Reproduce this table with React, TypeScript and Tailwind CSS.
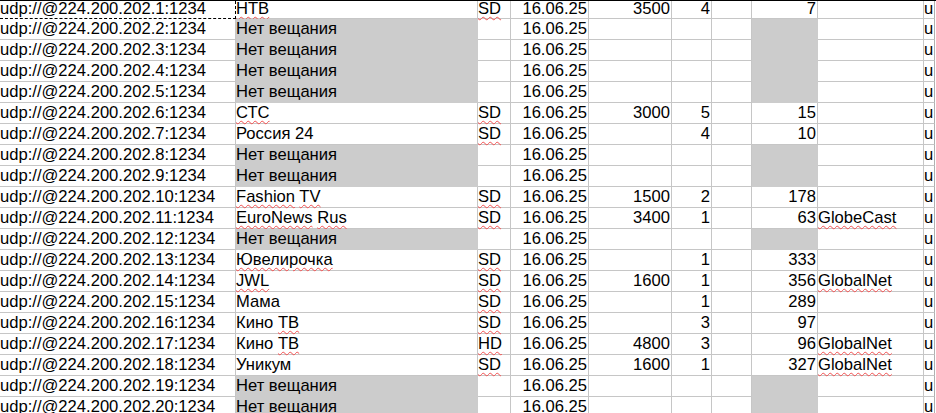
import React from "react";

type Seg = string | { w: string };

type Row = {
  off?: boolean;
  name?: Seg[];
  q?: string;
  br?: string;
  num?: string;
  id?: string;
  op?: string;
};

const rows: Row[] = [
  { name: [{ w: "НТВ" }], q: "SD", br: "3500", num: "4", id: "7" },
  { off: true },
  { off: true },
  { off: true },
  { off: true },
  { name: [{ w: "СТС" }], q: "SD", br: "3000", num: "5", id: "15" },
  { name: ["Россия 24"], q: "SD", num: "4", id: "10" },
  { off: true },
  { off: true },
  { name: [{ w: "Fashion" }, " ", { w: "TV" }], q: "SD", br: "1500", num: "2", id: "178" },
  { name: [{ w: "EuroNews" }, " ", { w: "Rus" }], q: "SD", br: "3400", num: "1", id: "63", op: "GlobeCast" },
  { off: true },
  { name: [{ w: "Ювелирочка" }], q: "SD", num: "1", id: "333" },
  { name: [{ w: "JWL" }], q: "SD", br: "1600", num: "1", id: "356", op: "GlobalNet" },
  { name: ["Мама"], q: "SD", num: "1", id: "289" },
  { name: ["Кино ", { w: "ТВ" }], q: "SD", num: "3", id: "97" },
  { name: ["Кино ", { w: "ТВ" }], q: "HD", br: "4800", num: "3", id: "96", op: "GlobalNet" },
  { name: ["Уникум"], q: "SD", br: "1600", num: "1", id: "327", op: "GlobalNet" },
  { off: true },
  { off: true },
];

// red spell-check squiggle
function Wavy({ children }: { children: React.ReactNode }) {
  return (
    <span className="underline decoration-wavy decoration-[#f25050] decoration-[1px] underline-offset-[2px]">
      {children}
    </span>
  );
}

function Text({ segs }: { segs: Seg[] }) {
  return (
    <>
      {segs.map((s, i) =>
        typeof s === "string" ? <span key={i}>{s}</span> : <Wavy key={i}>{s.w}</Wavy>
      )}
    </>
  );
}

const grid = "border-[#c6c6c6]";
const grey = "bg-[#cccccc] border-[#cccccc]";

function Cell({
  w,
  top,
  right,
  shade,
  extra,
  children,
}: {
  w: string;
  top?: boolean;
  right?: boolean;
  shade?: boolean;
  extra?: string;
  children?: React.ReactNode;
}) {
  // first row is clipped by the header edge, so its text sits a bit higher
  const fit = top ? "items-start leading-[15px]" : "items-end leading-[20px]";
  return (
    <div
      className={`shrink-0 flex whitespace-nowrap border-r border-b ${fit} ${w} ${shade ? grey : grid} ${
        right ? "justify-end pr-[1px]" : "pl-0"
      } ${extra ?? ""}`}
    >
      <span>{children}</span>
    </div>
  );
}

export default function App() {
  return (
    <div
      className="w-[936px] h-[413px] overflow-hidden bg-white text-black text-[16.6px]"
      style={{ fontFamily: '"Liberation Sans", Arial, sans-serif' }}
    >
      <div className="h-[1px] bg-black" />
      {rows.map((r, i) => {
        const first = i === 0;
        return (
          <div key={i} className={`flex ${first ? "h-[18px]" : "h-[21px]"}`}>
            <Cell w="w-[236px]" top={first} extra={first ? "!border-black border-dashed" : ""}>
              {`udp://@224.200.202.${i + 1}:1234`}
            </Cell>
            <Cell w="w-[242px]" top={first} shade={r.off}>
              {r.off ? "Нет вещания" : <Text segs={r.name ?? []} />}
            </Cell>
            <Cell w="w-[33px]" top={first}>
              {r.q ? <Wavy>{r.q}</Wavy> : null}
            </Cell>
            <Cell w="w-[78px]" top={first} right>
              16.06.25
            </Cell>
            <Cell w="w-[83px]" top={first} right>
              {r.br}
            </Cell>
            <Cell w="w-[40px]" top={first} right>
              {r.num}
            </Cell>
            <Cell w="w-[40px]" top={first} />
            <Cell w="w-[66px]" top={first} right shade={r.off}>
              {r.id}
            </Cell>
            <Cell w="w-[106px]" top={first}>
              {r.op ? <Wavy>{r.op}</Wavy> : null}
            </Cell>
            <Cell w="w-[11px]" top={first} extra="!border-r-[#b0b0b0]">
              u
            </Cell>
          </div>
        );
      })}
    </div>
  );
}
